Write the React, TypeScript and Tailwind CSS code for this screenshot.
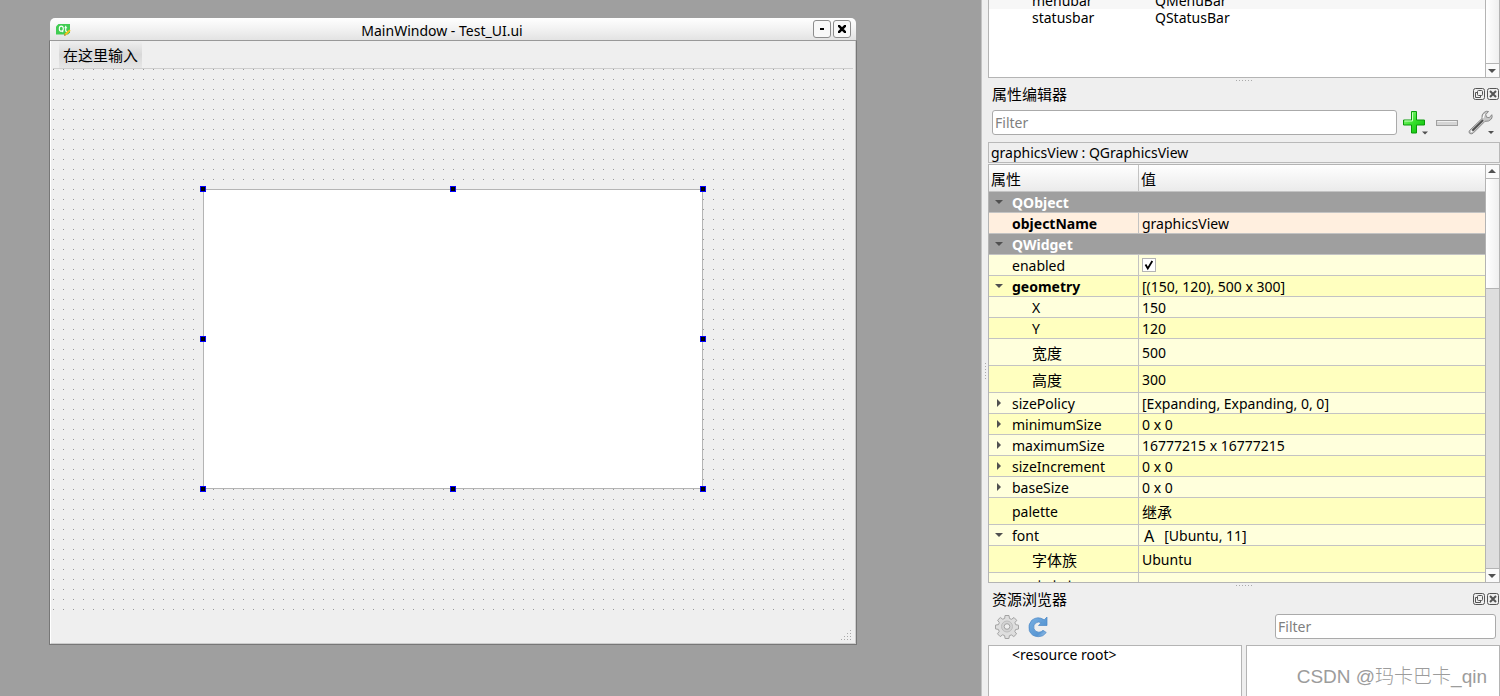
import type { ReactNode } from 'react';
import clsx from 'clsx';

type Property = {
  name: string;
  value?: ReactNode;
  kind?: 'group' | 'name' | 'light' | 'dark';
  arrow?: 'open' | 'closed';
  bold?: boolean;
  child?: boolean;
  tall?: boolean;
};

const properties: Property[] = [
  { name: 'QObject', kind: 'group', arrow: 'open' },
  { name: 'objectName', value: 'graphicsView', kind: 'name', bold: true },
  { name: 'QWidget', kind: 'group', arrow: 'open' },
  { name: 'enabled', value: <EnabledBox />, kind: 'light' },
  { name: 'geometry', value: '[(150, 120), 500 x 300]', kind: 'dark', arrow: 'open', bold: true },
  { name: 'X', value: '150', kind: 'light', child: true },
  { name: 'Y', value: '120', kind: 'dark', child: true },
  { name: '宽度', value: '500', kind: 'light', child: true, tall: true },
  { name: '高度', value: '300', kind: 'dark', child: true, tall: true },
  { name: 'sizePolicy', value: '[Expanding, Expanding, 0, 0]', kind: 'light', arrow: 'closed' },
  { name: 'minimumSize', value: '0 x 0', kind: 'dark', arrow: 'closed' },
  { name: 'maximumSize', value: '16777215 x 16777215', kind: 'light', arrow: 'closed' },
  { name: 'sizeIncrement', value: '0 x 0', kind: 'dark', arrow: 'closed' },
  { name: 'baseSize', value: '0 x 0', kind: 'light', arrow: 'closed' },
  { name: 'palette', value: <span className="block text-[15px] leading-6">继承</span>, kind: 'dark', tall: true },
  { name: 'font', value: <FontValue />, kind: 'light', arrow: 'open' },
  { name: '字体族', value: 'Ubuntu', kind: 'dark', child: true, tall: true },
  { name: '点大小', kind: 'light', child: true, tall: true },
];

const handles = [
  '-left-1 -top-1',
  'left-[246px] -top-1',
  'left-[496px] -top-1',
  '-left-1 top-[146px]',
  'left-[496px] top-[146px]',
  '-left-1 top-[296px]',
  'left-[246px] top-[296px]',
  'left-[496px] top-[296px]',
];

function EnabledBox() {
  return (
    <span className="grid size-[14px]">
      <input
        type="checkbox"
        aria-label="enabled"
        defaultChecked
        className="peer col-start-1 row-start-1 size-[14px] appearance-none border border-[#b4b4b4] bg-white"
      />
      <svg
        viewBox="0 0 14 14"
        className="pointer-events-none invisible col-start-1 row-start-1 size-[14px] peer-checked:visible"
      >
        <path d="M3.500 6.500 5.800 10.500 10.300 3" fill="none" stroke="#000" strokeWidth="1.800" />
      </svg>
    </span>
  );
}

function FontValue() {
  return (
    <span className="flex items-center gap-[10px]">
      <span className="pl-[2px] text-base leading-[18px]">A</span>
      <span>[Ubuntu, 11]</span>
    </span>
  );
}

function Arrow({ dir }: { dir: 'up' | 'down' | 'right' }) {
  const d = { up: 'M0 5h8L4 1z', down: 'M0 2h8L4 6z', right: 'M2 0v8l4-4z' }[dir];
  return (
    <svg viewBox="0 0 8 8" className="size-2 shrink-0">
      <path d={d} fill="#505050" />
    </svg>
  );
}

function Grip({ className }: { className: string }) {
  return (
    <span
      className={clsx(
        'bg-[conic-gradient(from_270deg_at_1px_1px,#aaaaaa_90deg,transparent_0)] bg-[length:3px_3px]',
        className,
      )}
    />
  );
}

function Splitter() {
  return (
    <div className="flex h-[5px] shrink-0 items-center justify-center">
      <Grip className="h-px w-4" />
    </div>
  );
}

function DockTitle({ title }: { title: string }) {
  return (
    <div className="flex h-6 shrink-0 items-center gap-[2px] pr-px pb-[2px] pl-1">
      <h2 className="grow text-[15px] leading-5">{title}</h2>
      <button type="button" aria-label="Float" className="size-3">
        <svg viewBox="0 0 12 12" className="size-3" fill="none" stroke="#555">
          <rect x=".5" y=".5" width="11" height="11" rx="2" />
          <rect x="4.500" y="2.500" width="5" height="5" rx="1" />
          <path d="M4.500 4.500h-2v5h5v-2" />
        </svg>
      </button>
      <button type="button" aria-label="Close" className="size-3">
        <svg viewBox="0 0 12 12" className="size-3" fill="none" stroke="#555">
          <rect x=".5" y=".5" width="11" height="11" rx="2" />
          <path d="m3 3 6 6M9 3 3 9" strokeWidth="2" />
        </svg>
      </button>
    </div>
  );
}

function ScrollButton({ dir }: { dir: 'up' | 'down' }) {
  return (
    <button
      type="button"
      aria-label={dir === 'up' ? 'Scroll up' : 'Scroll down'}
      className={clsx(
        'flex h-[14px] w-full shrink-0 items-center border-[#b4b4b4] bg-[#fafafa] pl-[2px]',
        dir === 'up' ? 'border-b' : 'border-t',
      )}
    >
      <Arrow dir={dir} />
    </button>
  );
}

function FormWindow() {
  return (
    <section className="w-[808px] shrink-0">
      <header className="mx-px flex h-[22px] items-center gap-[2px] rounded-t-[5px] bg-linear-to-b from-white from-0% via-[#f2f2f2] via-50% to-[#e3e3e3] pr-[5px] pl-[6px]">
        <svg viewBox="0 0 15 13" className="h-[13px] w-[15px]">
          <path d="M2.500 1H14v8.500L12 11.500H0V3.500z" fill="#41cd52" />
          <g fill="none" stroke="#fff" strokeWidth="1.100">
            <ellipse cx="5.300" cy="5.700" rx="2" ry="2.600" />
            <path d="m5.800 7.500 1.400 1.700M9.700 2.800v4.700q0 1 1.200.9M8.500 4.700h2.600" />
          </g>
          <path d="m8 12.800.6-2 4.700-4.300 1.400 1.300-4.700 4.400z" fill="#f6c21c" />
          <path d="m8 12.800.6-2 1.400 1.400z" fill="#8a7a50" />
        </svg>
        <h1 className="grow pt-[3px] text-center text-sm leading-[18px]">MainWindow - Test_UI.ui</h1>
        <button
          type="button"
          aria-label="Minimize"
          className="flex size-[18px] items-center justify-center rounded-[3px] border border-[#8c8c8c] bg-[#f8f8f8]"
        >
          <span className="h-[2px] w-1 bg-black" />
        </button>
        <button
          type="button"
          aria-label="Close window"
          className="flex size-[18px] items-center justify-center rounded-[3px] border border-[#8c8c8c] bg-[#f8f8f8]"
        >
          <svg viewBox="0 0 8 8" className="size-2">
            <path d="m0 0 8 8M8 0 0 8" stroke="#000" strokeWidth="2.600" />
          </svg>
        </button>
      </header>
      <div className="border border-[#777777] border-t-[#999999] bg-[#efefef]">
        <div className="border-r border-b border-l border-r-[#cccccc] border-b-[#cccccc] border-l-white px-[2px]">
          <nav className="flex h-7 border-b border-[#cfcfcf] px-[6px]">
            <button
              type="button"
              className="h-full bg-linear-to-b from-[#efefef] via-[#d8d8d8] to-[#e6e6e6] px-1 text-[15px] leading-6"
            >
              在这里输入
            </button>
          </nav>
          <div className="relative h-[543px] bg-[conic-gradient(from_270deg_at_1px_1px,#999999_90deg,transparent_0)] bg-[length:10px_10px]">
            <div className="absolute top-[120px] left-[150px] h-[300px] w-[500px] border border-[#b4b4b4] bg-white">
              {handles.map((place) => (
                <span
                  key={place}
                  className={clsx('absolute size-[6px] border border-[#0000ff] bg-black', place)}
                />
              ))}
            </div>
          </div>
          <footer className="flex h-[31px] items-end justify-end pr-px pb-[2px]">
            <svg viewBox="0 0 11 11" className="size-[11px]" fill="#aaa">
              <path d="M9 0h1v1H9zM6 3h1v1H6zM9 3h1v1H9zM3 6h1v1H3zM6 6h1v1H6zM9 6h1v1H9zM0 9h1v1H0zM3 9h1v1H3zM6 9h1v1H6zM9 9h1v1H9z" />
            </svg>
          </footer>
        </div>
      </div>
    </section>
  );
}

function ObjectInspector() {
  return (
    <div className="flex h-[78px] shrink-0 border-r border-b border-l border-[#b4b4b4] bg-white">
      <div className="flex min-w-0 grow flex-col overflow-hidden">
        <div className="flex h-[9px] shrink-0 items-end bg-[#f7f7f7] pl-[43px]">
          <span className="w-[123px] leading-[17px]">menubar</span>
          <span className="leading-[17px]">QMenuBar</span>
        </div>
        <div className="flex h-[18px] items-center pl-[43px]">
          <span className="w-[123px] leading-[18px]">statusbar</span>
          <span className="leading-[18px]">QStatusBar</span>
        </div>
      </div>
      <div className="flex w-[14px] flex-col border-l border-[#b4b4b4] bg-linear-to-r from-white to-[#efefef]">
        <div className="grow" />
        <ScrollButton dir="down" />
      </div>
    </div>
  );
}

function PropertyRow({ name, value, kind, arrow, bold, child, tall }: Property) {
  const group = kind === 'group';
  return (
    <tr
      className={clsx(
        tall ? 'h-[27px]' : 'h-[21px]',
        group && 'bg-[#9f9f9f] text-white',
        kind === 'name' && 'bg-[#ffefdf]',
        kind === 'light' && 'bg-[#ffffdc]',
        kind === 'dark' && 'bg-[#ffffbf]',
      )}
    >
      <th
        scope="row"
        colSpan={group ? 2 : 1}
        className={clsx(
          'border-b border-[#c3c3c3] p-0 text-left',
          !group && 'border-r',
          bold || group ? 'font-bold' : 'font-normal',
        )}
      >
        <div className={clsx('flex items-center gap-[9px]', child ? 'pl-[43px]' : 'pl-[6px]')}>
          {!child && (arrow ? <Arrow dir={arrow === 'open' ? 'down' : 'right'} /> : <span className="size-2" />)}
          <span className={clsx('pt-[2px]', tall ? 'leading-6' : 'leading-[18px]', child && tall && 'text-[15px]')}>
            {name}
          </span>
        </div>
      </th>
      {!group && (
        <td className="border-b border-[#c3c3c3] p-0 pl-[3px]">
          <div className={clsx(name !== 'enabled' && 'pt-[2px]', tall ? 'leading-6' : 'leading-[18px]')}>{value}</div>
        </td>
      )}
    </tr>
  );
}

function PropertyEditor() {
  return (
    <section className="flex min-h-0 grow flex-col">
      <DockTitle title="属性编辑器" />
      <div className="mb-1 flex h-[31px] shrink-0 items-center gap-[6px] pr-[5px] pl-1">
        <input
          type="text"
          aria-label="Filter properties"
          placeholder="Filter"
          className="h-[25px] min-w-0 grow rounded-[3px] border border-[#aaaaaa] bg-white px-[2px] placeholder:text-[#808080]"
        />
        <button type="button" aria-label="Add property">
          <svg viewBox="0 0 26 24" className="h-6 w-[26px]">
            <defs>
              <linearGradient id="plus" x1="0" y1="0" x2="1" y2="1">
                <stop offset="0" stopColor="#9cff8c" />
                <stop offset=".5" stopColor="#35e02a" />
                <stop offset="1" stopColor="#06b806" />
              </linearGradient>
            </defs>
            <path
              d="M8.500.5h5v8.500h8v5h-8v8h-5v-8h-8V9h8z"
              fill="url(#plus)"
              stroke="#0a9a0a"
              strokeLinejoin="round"
            />
            <path d="M9.500 1.500V10h-8" fill="none" stroke="#c9ffc0" />
            <path d="M19 20.500h6l-3 3z" fill="#505050" />
          </svg>
        </button>
        <button type="button" aria-label="Remove property" className="pr-1 pl-px">
          <svg viewBox="0 0 22 8" className="h-2 w-[22px]">
            <rect x=".5" y="1.500" width="21" height="5" fill="#d5d5d5" stroke="#a0a0a0" />
            <path d="M1.500 2.500h19" stroke="#f0f0f0" />
          </svg>
        </button>
        <button type="button" aria-label="Configure">
          <svg viewBox="0 0 27 25" className="h-[25px] w-[27px]">
            <path
              d="M1.500 20.500 14 8.500q-.8-4 2.300-6.300 2.300-1.500 4.200-.7l-2.700 3 .7 2.700 2.800.5 2.500-3q1 2-.4 4.300-2.300 2.900-6.400 2.300L5 23.300q-2 1.200-3.400 0-1.200-1.300-.1-2.800z"
              fill="#c6c6c6"
              stroke="#777"
              strokeWidth=".8"
            />
            <path d="M5 20 14.500 10.600" stroke="#505050" strokeWidth="2" strokeLinecap="round" />
            <path d="m15 8 1.500-4" stroke="#fff" strokeWidth="1.200" />
            <circle cx="3.600" cy="21.400" r=".8" fill="#fff" />
            <path d="M20 21h6l-3 3z" fill="#505050" />
          </svg>
        </button>
      </div>
      <p className="mb-px h-[21px] shrink-0 border border-[#b9b9b9] pl-[2px] leading-[19px]">
        graphicsView : QGraphicsView
      </p>
      <div className="flex min-h-0 grow border border-[#b4b4b4]">
        <div className="min-w-0 grow overflow-hidden">
          <table className="w-full table-fixed border-separate border-spacing-0">
            <thead>
              <tr className="h-[27px] bg-linear-to-b from-white to-[#eaeaea] text-left text-[15px]">
                <th
                  scope="col"
                  className="w-[150px] border-r border-b border-[#c3c3c3] p-0 pt-[2px] pl-[2px] leading-6 font-normal"
                >
                  属性
                </th>
                <th scope="col" className="border-b border-[#c3c3c3] p-0 pt-[2px] pl-[2px] leading-6 font-normal">
                  值
                </th>
              </tr>
            </thead>
            <tbody>
              {properties.map((property) => (
                <PropertyRow key={property.name} {...property} />
              ))}
            </tbody>
          </table>
        </div>
        <div className="flex w-[14px] shrink-0 flex-col border-l border-[#b4b4b4] bg-[#dedede]">
          <ScrollButton dir="up" />
          <div className="h-[110px] border-b border-[#b4b4b4] bg-linear-to-r from-white to-[#efefef]" />
          <div className="grow" />
          <ScrollButton dir="down" />
        </div>
      </div>
    </section>
  );
}

function ResourceBrowser() {
  return (
    <section className="shrink-0">
      <DockTitle title="资源浏览器" />
      <div className="mb-1 flex h-[29px] items-center gap-[9px] pr-1 pl-[7px]">
        <button type="button" aria-label="Edit resources">
          <svg viewBox="0 1 24 24" className="size-6" fill="none" stroke="#a3a3a3">
            <path
              d="M10 1.500h4l.5 3 2 .8 2.500-1.800 2.700 2.800-1.800 2.400.8 2 2.800.5v3.800l-2.900.5-.8 2 1.800 2.400-2.800 2.700-2.400-1.700-2 .8-.5 2.800h-3.800l-.5-2.900-2-.8-2.400 1.800-2.700-2.800 1.700-2.400-.8-2-2.900-.5v-3.800l3-.5.8-2L2.600 6.200l2.700-2.700 2.400 1.700 2-.8z"
              fill="#dedede"
            />
            <circle cx="12" cy="12.500" r="5.500" fill="#d3d3d3" stroke="#bdbdbd" />
            <circle cx="12" cy="12.500" r="2.800" fill="#efefef" />
          </svg>
        </button>
        <button type="button" aria-label="Reload">
          <svg viewBox="0 0 20 22" className="h-[22px] w-5">
            <defs>
              <linearGradient id="reload" x1="0" y1="0" x2="1" y2="1">
                <stop offset="0" stopColor="#7ab0e2" />
                <stop offset=".7" stopColor="#5796d3" />
                <stop offset="1" stopColor="#b5d2ee" />
              </linearGradient>
            </defs>
            <path
              d="M19 1v8.500h-8.500l2.700-2.800q-3-1.500-5.600.4Q5 9.500 6 12.800q1.300 3.300 4.800 3.400 2.500 0 4.200-1.900l3.300 2.200q-3 4.300-8 4.200-6.600-.2-9-6Q-.3 8.500 3.700 4.300 9.500-.5 16.200 3.800z"
              fill="url(#reload)"
              stroke="#4a87c5"
              strokeWidth=".7"
            />
          </svg>
        </button>
        <input
          type="text"
          aria-label="Filter resources"
          placeholder="Filter"
          className="ml-auto h-[25px] w-[221px] rounded-[3px] border border-[#aaaaaa] bg-white px-[2px] placeholder:text-[#808080]"
        />
      </div>
      <div className="flex h-[51px] gap-1">
        <div className="w-[254px] border border-b-0 border-[#b4b4b4] bg-white pl-[23px] leading-[18px]">
          &lt;resource root&gt;
        </div>
        <div className="flex grow items-center justify-end border border-b-0 border-[#b4b4b4] bg-white pt-3 pr-3 font-['Liberation_Sans','Noto_Sans_CJK_SC',sans-serif] text-[19px] font-light text-[#9c9c9c]">
          CSDN @玛卡巴卡_qin
        </div>
      </div>
    </section>
  );
}

export default function App() {
  return (
    <div className="flex h-screen overflow-hidden bg-[#9f9f9f] font-['Noto_Sans','Noto_Sans_CJK_SC',sans-serif] text-sm text-black">
      <main className="min-w-0 grow overflow-hidden pt-[18px] pl-[49px]">
        <FormWindow />
      </main>
      <aside className="flex w-[519px] shrink-0 border-l border-[#c3c3c3] bg-[#efefef]">
        <div className="flex w-[6px] shrink-0 items-center justify-center pt-[46px]">
          <Grip className="h-4 w-px" />
        </div>
        <div className="flex min-w-0 grow flex-col">
          <ObjectInspector />
          <Splitter />
          <PropertyEditor />
          <Splitter />
          <ResourceBrowser />
        </div>
      </aside>
    </div>
  );
}
